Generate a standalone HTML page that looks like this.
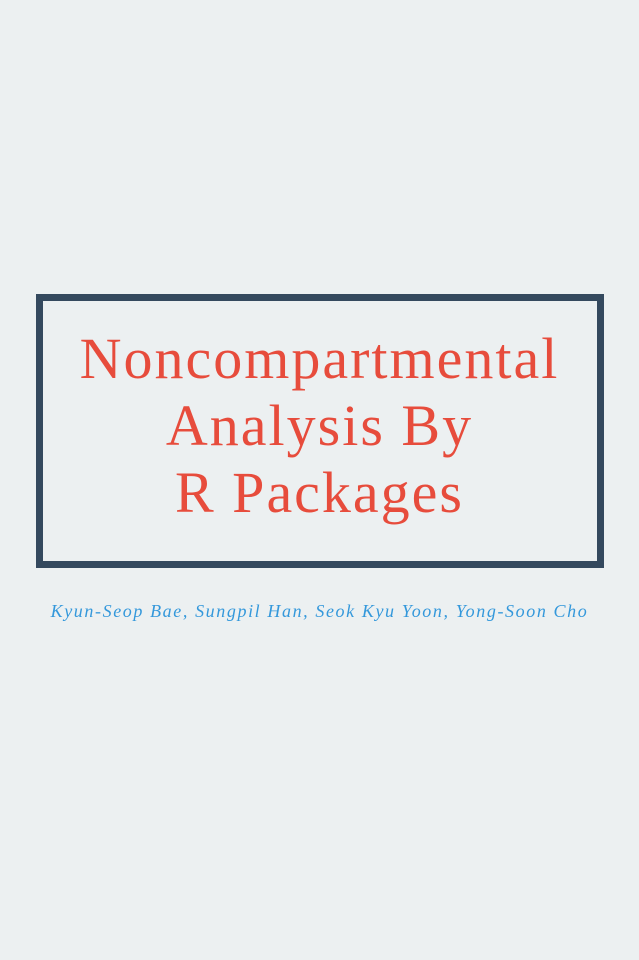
<!DOCTYPE html>
<html><head><meta charset="utf-8"><style>
html,body{margin:0;padding:0;}
body{width:639px;height:960px;background:#ecf0f1;position:relative;overflow:hidden;font-family:"Liberation Serif",serif;}
.box{position:absolute;left:36px;top:294px;width:554px;height:260px;border:7px solid #34495e;}
.title{position:absolute;left:0;width:639px;top:325px;text-align:center;color:#e74c3c;font-size:58px;line-height:67px;letter-spacing:2px;}
.auth{position:absolute;left:0;width:639px;top:601px;text-align:center;color:#3498db;font-style:italic;font-size:18px;letter-spacing:1.6px;}
</style></head><body>
<div class="box"></div>
<div class="title">Noncompartmental<br>Analysis By<br>R Packages</div>
<div class="auth">Kyun-Seop Bae, Sungpil Han, Seok Kyu Yoon, Yong-Soon Cho</div>
</body></html>
